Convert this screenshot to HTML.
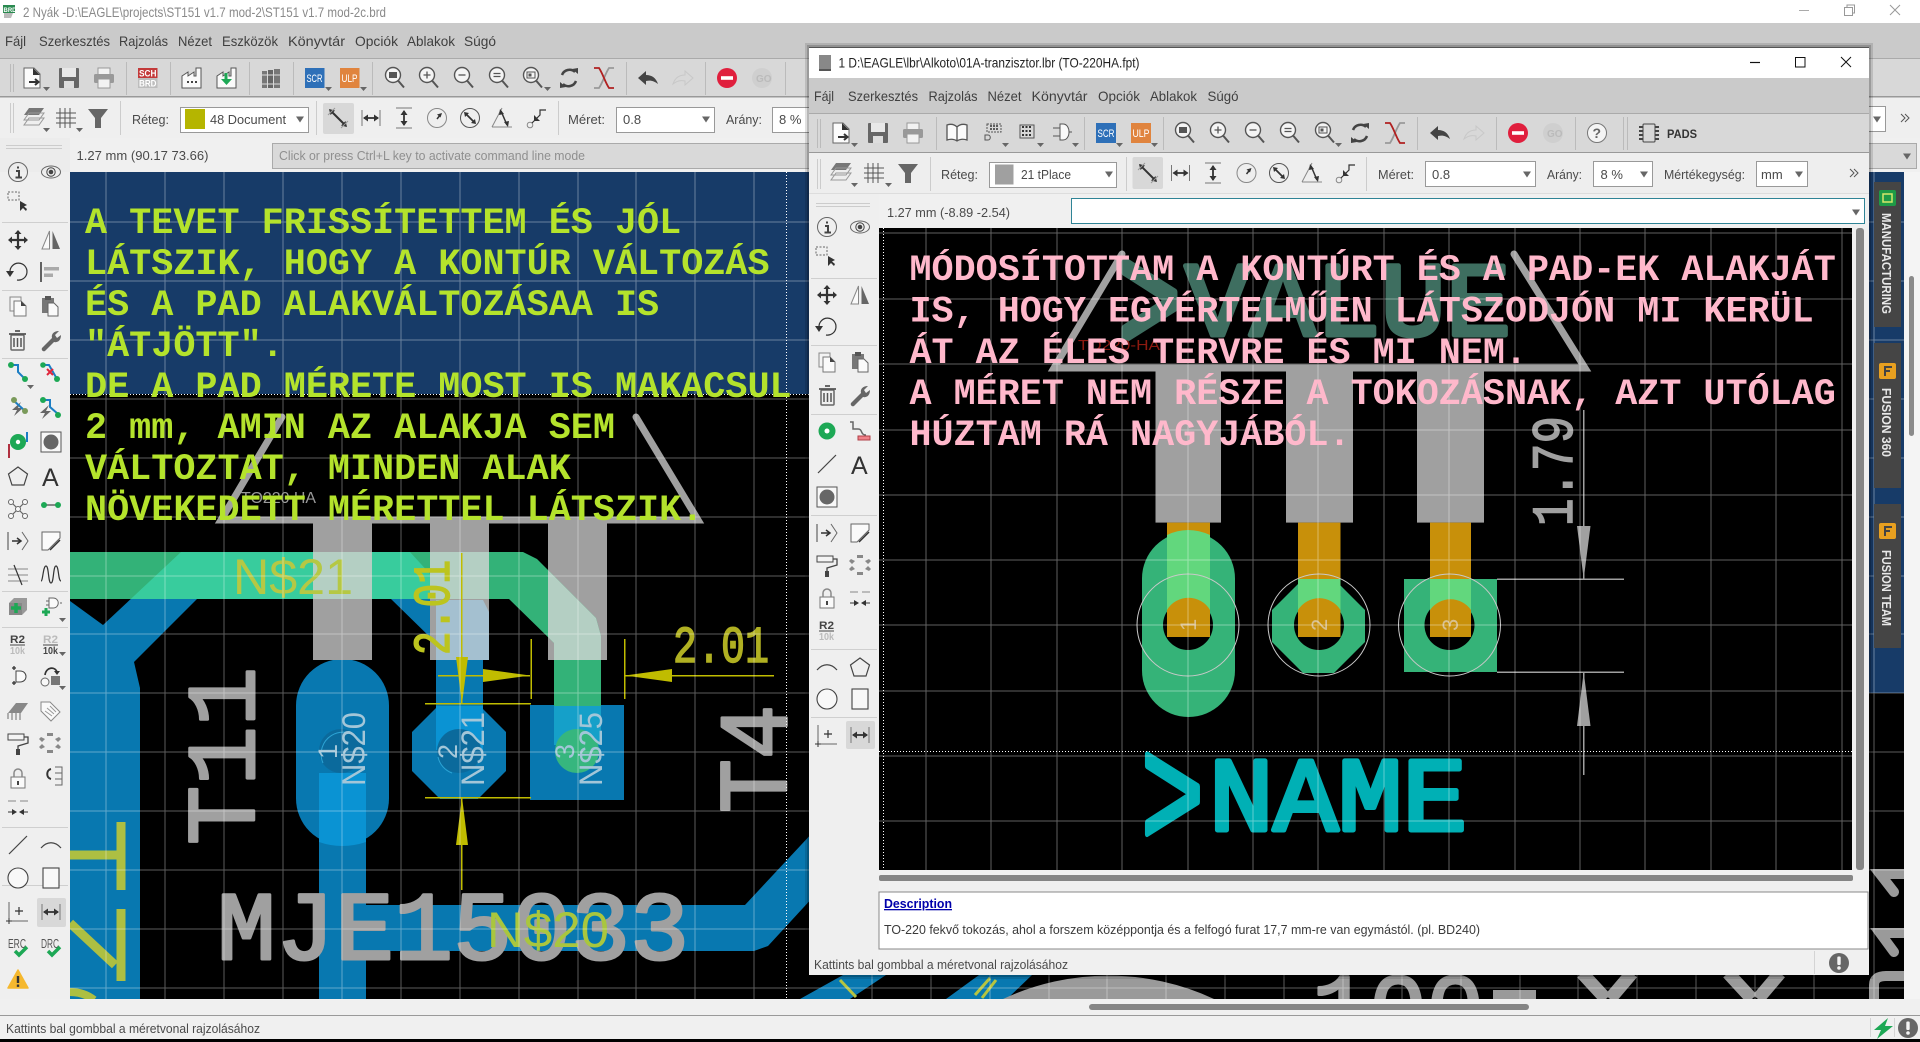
<!DOCTYPE html>
<html lang="hu"><head><meta charset="utf-8"><title>EAGLE</title>
<style>
html,body{margin:0;padding:0;background:#000;width:1920px;height:1042px;overflow:hidden}
svg{display:block}
text{font-family:"Liberation Sans",sans-serif;font-size:13px;fill:#3a3a3a}
.mono{font-family:"Liberation Mono",monospace}
.lime{font-family:"Liberation Mono",monospace;font-size:36.8px;font-weight:bold;fill:#b4e32c}
.pink{font-family:"Liberation Mono",monospace;font-size:36.76px;font-weight:bold;fill:#ffb8cb}
.men{font-size:14px;fill:#3f3f3f}
.big{font-family:"Liberation Mono",monospace;font-size:97px;fill:#a0a0a0;stroke:#a0a0a0;stroke-width:3;stroke-linejoin:round}
.lb{font-size:13px;fill:#4a4a4a}
</style></head><body>
<svg width="1920" height="1042" viewBox="0 0 1920 1042" xmlns="http://www.w3.org/2000/svg" shape-rendering="geometricPrecision">
<defs>
<clipPath id="cm"><rect x="70" y="172" width="1834" height="827"/></clipPath>
<clipPath id="cs"><rect x="879" y="228" width="973" height="642"/></clipPath>
<clipPath id="gt"><path d="M70 552H523L537 559L596 618L601 636V706H554V643L509 599H70Z"/></clipPath>
<g id="dd"><path d="M0 0h7l-3.5 4z" fill="#666"/></g>
<g id="arr"><path d="M-4 -2.5h8l-4 6z" fill="#666"/></g>
<g id="new"><path d="M-9 -10H1L7 -4V10H-9Z" fill="#fbfbfb" stroke="#666"/><path d="M0 -10L7 -3H0Z" fill="#333"/><path d="M-4 4H5M2 1l3.500 3-3.500 3" stroke="#333" stroke-width="2" fill="none"/></g>
<g id="save"><rect x="-10" y="-10" width="20" height="20" rx="1" fill="#666"/><rect x="-7" y="-10" width="14" height="9" fill="#e8e8e8"/><rect x="-5" y="3" width="10" height="7" fill="#ddd"/></g>
<g id="print"><rect x="-6" y="-10" width="12" height="7" fill="#f2f2f2" stroke="#999"/><rect x="-10" y="-4" width="20" height="9" rx="1.500" fill="#999"/><rect x="-6" y="1" width="12" height="9" fill="#f2f2f2" stroke="#999"/></g>
<g id="fact"><path d="M-10 10V-2L-4 -6V-2L2 -6V-2L4 -2V-10H9V10Z" fill="#fafafa" stroke="#555"/></g>
<g id="books"><rect x="-9" y="-7" width="5" height="17" fill="#777"/><rect x="-3" y="-8" width="5" height="18" fill="#666"/><rect x="3" y="-9" width="6" height="19" fill="#777"/><path d="M-9 -3h18M-9 6h18" stroke="#ddd"/></g>
<g id="zf"><circle cx="-2" cy="-3" r="7.500" fill="#f4f4f4" stroke="#555" stroke-width="1.400"/><path d="M3 2.500L9 9.500" stroke="#555" stroke-width="2"/></g>
<g id="z1"><use href="#zf"/><rect x="-6" y="-6" width="8" height="6" fill="#555"/></g>
<g id="z2"><use href="#zf"/><path d="M-5.500 -3h7M-2 -6.500v7" stroke="#555" stroke-width="1.300"/></g>
<g id="z3"><use href="#zf"/><path d="M-5.500 -3h7" stroke="#555" stroke-width="1.300"/></g>
<g id="z4"><use href="#zf"/><path d="M-5.500 -4.500h7M-5.500 -1.500h7" stroke="#555" stroke-width="1.300"/></g>
<g id="z5"><use href="#zf"/><rect x="-6" y="-6" width="8" height="6" fill="none" stroke="#555"/><rect x="-4.500" y="-4.500" width="3" height="3" fill="#555"/></g>
<g id="rot"><path d="M-7 -3A8 8 0 0 1 6 -6M7 3A8 8 0 0 1 -6 6" fill="none" stroke="#444" stroke-width="2.500"/><path d="M3 -9l6 -1v6zM-3 9l-6 1v-6z" fill="#444"/></g>
<g id="rats"><path d="M10 -10H5C1 -4 -1 4 -5 10H-10" fill="none" stroke="#999" stroke-width="1.800"/><path d="M-10 -10H-5C-1 -4 1 4 5 10H10" fill="none" stroke="#b02020" stroke-width="1.800"/></g>
<g id="undo"><path d="M-10 0L-2 -7V-3C4 -3 8 0 10 6C6 3 3 2 -2 3V7Z" fill="#444"/></g>
<g id="redo"><path d="M10 0L2 -7V-3C-4 -3 -8 0 -10 6C-6 3 -3 2 2 3V7Z" fill="none" stroke="#c8c8c8"/></g>
<g id="stop"><circle r="10" fill="#e01f3d"/><rect x="-6" y="-1.800" width="12" height="3.600" fill="#fff"/></g>
<g id="go"><circle r="10" fill="#cfcfcf"/></g>
<g id="layers"><path d="M-5 -10H10L5 -3H-10Z" fill="#777"/><path d="M-5 -5H10L5 2H-10ZM-5 0H10L5 7H-10Z" fill="none" stroke="#999"/></g>
<g id="grid"><path d="M-6 -10V10M-1 -10V10M4 -10V10M-10 -5H10M-10 0H10M-10 5H10" stroke="#555" fill="none"/></g>
<g id="filter"><path d="M-10 -9H10L3 0V10H-3V0Z" fill="#666"/></g>
<g id="d1"><path d="M-8 -8L8 8" stroke="#333" stroke-width="2"/><path d="M-9 -9l6 1.500-4.500 4.500zM9 9l-6 -1.500 4.500 -4.500z" fill="#333"/><path d="M-10 -3L-3 -10M3 10L10 3" stroke="#999"/></g>
<g id="d2"><path d="M-9 -8V8M9 -8V8" stroke="#777"/><path d="M-7 0H7" stroke="#333" stroke-width="1.800"/><path d="M-8 0l5 -3.500v7zM8 0l-5 -3.500v7z" fill="#333"/></g>
<g id="d3"><path d="M-8 -10H8M-8 10H8" stroke="#777"/><path d="M0 -7V7" stroke="#333" stroke-width="1.800"/><path d="M0 -8l-3.500 5h7zM0 8l-3.500 -5h7z" fill="#333"/></g>
<g id="d4"><circle r="9.500" fill="none" stroke="#888"/><path d="M0 1L4 -4" stroke="#333" stroke-width="1.500"/><path d="M5 -5l-5 1.500 3.500 3z" fill="#333"/></g>
<g id="d5"><circle r="9.500" fill="none" stroke="#555"/><path d="M-5 -5L5 5" stroke="#333" stroke-width="1.800"/><path d="M-6 -6l5 1 -4 4zM6 6l-5 -1 4 -4z" fill="#333"/></g>
<g id="d6"><path d="M-10 9H10M-10 9L0 -10" stroke="#888" fill="none"/><path d="M-1 -7L5 7" stroke="#333" stroke-width="1.500"/><path d="M-2 -9l4 5-5 1zM6 9l-4 -5 5 -1z" fill="#333"/></g>
<g id="d7"><circle cx="-7" cy="7" r="2.800" fill="none" stroke="#888"/><path d="M-5 5L3 -3V-8H9" stroke="#333" fill="none" stroke-width="1.200"/><path d="M-3 3l0 -6 6 6z" fill="#333"/></g>
<g id="info"><circle r="9.500" fill="none" stroke="#666"/><path d="M-2 -1H1V5M-2.500 5.500H4M0 -5.500V-3.500" stroke="#444" stroke-width="2" fill="none"/></g>
<g id="eye"><ellipse rx="9.500" ry="6" fill="none" stroke="#666"/><circle r="4.200" fill="none" stroke="#444"/><circle r="2.300" fill="#444"/></g>
<g id="sel"><rect x="-8" y="-8" width="11" height="8" fill="none" stroke="#666" stroke-dasharray="2 1.500"/><path d="M4 1V11L7 8L10 11L11 9L8 6.500L11 5Z" fill="#333"/></g>
<g id="move"><path d="M-8 0H8M0 -8V8" stroke="#333" stroke-width="2.200"/><path d="M0 -10l-3.500 4h7zM0 10l-3.500 -4h7zM-10 0l4 -3.500v7zM10 0l-4 -3.500v7z" fill="#333"/></g>
<g id="mirror"><path d="M-1.500 -9L-9 9H-1.500Z" fill="#fafafa" stroke="#888"/><path d="M1.500 -9L9 9H1.500Z" fill="#666"/></g>
<g id="rotl"><path d="M-8 0A8.500 8.500 0 1 1 -1 8" fill="none" stroke="#333" stroke-width="1.200"/><path d="M-12 -1h8l-4 6z" fill="#333"/></g>
<g id="align"><path d="M-9 -10V10" stroke="#333" stroke-width="1.500"/><rect x="-6" y="-5" width="15" height="3.500" fill="#aaa"/><rect x="-6" y="1.500" width="9" height="3.500" fill="#aaa"/></g>
<g id="copy"><rect x="-8" y="-9" width="11" height="14" fill="#f4f4f4" stroke="#888"/><path d="M-4 -5H3L8 0V10H-4Z" fill="#fafafa" stroke="#777"/><path d="M3 -5L8 0H3Z" fill="#444"/></g>
<g id="paste"><rect x="-8" y="-8" width="12" height="15" fill="#777"/><rect x="-5" y="-10" width="6" height="4" fill="#555"/><path d="M-2 -3H4L8 1V10H-2Z" fill="#fafafa" stroke="#666"/></g>
<g id="del"><rect x="-6" y="-6" width="13" height="15" rx="1" fill="none" stroke="#666" stroke-width="1.500"/><path d="M-8 -7H9M-2 -10H3" stroke="#555" stroke-width="1.800"/><path d="M-3 -3V6M0.500 -3V6M4 -3V6" stroke="#555" stroke-width="1.500"/></g>
<g id="wrench"><path d="M-9 7L1 -3C0 -7 3 -10 8 -10L4 -6L6 -3L10 -6C10 -1 7 2 3 1L-6 10C-8 11 -10 9 -9 7Z" fill="#666"/></g>
<g id="route"><path d="M-7 -8H0V-1L7 6" fill="none" stroke="#1c7ec4" stroke-width="2"/><circle cx="-7" cy="-8" r="3" fill="#1da855"/><circle cx="7" cy="6" r="3" fill="#1da855"/></g>
<g id="rip"><path d="M-7 -8H-1L7 6" fill="none" stroke="#1c7ec4" stroke-width="2"/><circle cx="-7" cy="-8" r="2.800" fill="#1da855"/><circle cx="7" cy="6" r="3" fill="#1da855"/><path d="M-3 -4L3 2M3 -4L-3 2" stroke="#e0263c" stroke-width="2"/></g>
<g id="bolt"><path d="M3 -6L-6 2H-1L-4 8L5 0H0Z" fill="#666"/></g>
<g id="via"><circle r="8.500" cx="0" cy="0" fill="#1da855"/><circle r="2.500" fill="#fff"/></g>
<g id="hole"><rect x="-10" y="-10" width="20" height="20" fill="#f8f8f8" stroke="#555"/><circle r="7.500" fill="#666"/></g>
<g id="poly"><path d="M0 -9L9.500 -2L6 9H-6L-9.500 -2Z" fill="none" stroke="#444" stroke-width="1.200"/></g>
<g id="star"><path d="M-6 -6L6 6M6 -6L-6 6" stroke="#666" stroke-width="1.200"/><g fill="#f8f8f8" stroke="#666"><circle r="2.500"/><circle cx="-7" cy="-7" r="2.500"/><circle cx="7" cy="-7" r="2.500"/><circle cx="-7" cy="7" r="2.500"/><circle cx="7" cy="7" r="2.500"/></g></g>
<g id="wire"><path d="M-7 0H7" stroke="#888" stroke-width="2"/><circle cx="-7" r="3" fill="#1da855"/><circle cx="7" r="3" fill="#1da855"/></g>
<g id="bus"><path d="M-10 -9V9" stroke="#444"/><path d="M-6 0H2M-1 -3L3 0L-1 3" fill="none" stroke="#333" stroke-width="1.500"/><path d="M4 -9L10 0L4 9" fill="none" stroke="#666"/></g>
<g id="miter"><path d="M-9 -9H9V-3L1 5L-3 9H-9Z" fill="#fafafa" stroke="#666"/><path d="M-1 9L9 -1" stroke="#333" stroke-width="1.500"/></g>
<g id="slice"><path d="M-10 -6H10M-10 0H10M-10 6H10" stroke="#aaa" stroke-width="1.500"/><path d="M-4 -10L4 10" stroke="#333" stroke-width="1.200"/></g>
<g id="mean"><path d="M-10 6C-8 6 -8 -9 -5 -9C-2 -9 -3 8 0 8C3 8 2 -9 5 -9C8 -9 7 6 10 6" fill="none" stroke="#333" stroke-width="1.200"/></g>
<g id="addpkg"><path d="M-9 -4L-4 -9H9V3L4 8H-9Z" fill="#999"/><rect x="-9" y="-4" width="13" height="12" fill="#888"/><path d="M-7 1H3M-2 -4V6" stroke="#1da855" stroke-width="3.500"/></g>
<g id="addgate"><path d="M-3 -9H1C8 -9 8 1 1 1H-3Z" fill="#fafafa" stroke="#666"/><path d="M-6 -6H-3M-6 -2H-3M8 -4H10" stroke="#666"/><path d="M-10 5H-2M-6 1V9" stroke="#1da855" stroke-width="3"/></g>
<g id="gate2"><path d="M-2 -6H2C10 -6 10 5 2 5H-2Z" fill="#fafafa" stroke="#444"/><path d="M-6 -9H-2M-4 -11V-7M-6 6H-2M-4 4V8" stroke="#333" stroke-width="1.300"/></g>
<g id="repl"><circle cx="-6" cy="5" r="4" fill="#f8f8f8" stroke="#666"/><rect x="0" y="-1" width="9" height="9" fill="#777"/><path d="M-6 -2C-5 -10 4 -11 6 -5" fill="none" stroke="#333" stroke-width="1.700"/><path d="M3 -6h6l-3 4z" fill="#333"/></g>
<g id="chip"><path d="M-10 2L-2 -8H10L3 2Z" fill="#888"/><path d="M-10 2V8M-6 2V9M-2 2V9M2 2V9" stroke="#999" stroke-width="1.500"/></g>
<g id="tag"><path d="M-9 -9H0L10 1L1 10L-9 0Z" fill="#fafafa" stroke="#888"/><path d="M-3 -3L4 3M-5 0L2 5M0 -5L6 1" stroke="#999"/></g>
<g id="roll"><rect x="-10" y="-9" width="16" height="6" fill="#f4f4f4" stroke="#444"/><path d="M6 -6H10V0L0 3V6" fill="none" stroke="#444" stroke-width="1.300"/><rect x="-2" y="6" width="4" height="6" fill="#444"/></g>
<g id="dots"><g fill="#888"><rect x="-3" y="-10" width="6" height="3"/><rect x="-3" y="7" width="6" height="3"/><path d="M-9 -6l4 2-3 3-3 -3zM9 -6l-4 2 3 3 3 -3zM-9 6l4 -2-3 -3-3 3zM9 6l-4 -2 3 -3 3 3z"/></g></g>
<g id="lock"><rect x="-7" y="-1" width="14" height="11" fill="#fafafa" stroke="#777"/><path d="M-4 -1V-5A4 4 0 0 1 4 -5V-1" fill="none" stroke="#888" stroke-width="1.500"/><rect x="-1" y="3" width="2" height="4" fill="#444"/></g>
<g id="swp"><path d="M-1 -7C-6 -6 -6 2 -1 3" fill="none" stroke="#333" stroke-width="2"/><path d="M3 -9H10V9H3M3 -3H10M3 3H10" fill="none" stroke="#666"/></g>
<g id="inv"><path d="M-10 -6H-2M2 -6H10" stroke="#aaa" stroke-width="1.500"/><path d="M-10 5H-2M10 5H2" stroke="#333"/><path d="M-1 5l-5 -3v6zM1 5l5 -3v6z" fill="#333"/></g>
<g id="line"><path d="M-9 9L9 -9" stroke="#444" stroke-width="1.200"/></g>
<g id="arc"><path d="M-10 3C-4 -4 4 -4 10 3" fill="none" stroke="#444" stroke-width="1.200"/></g>
<g id="circ"><circle r="10" fill="#f8f8f8" stroke="#444" stroke-width="1.100"/></g>
<g id="rc"><rect x="-8" y="-10" width="16" height="20" fill="#f8f8f8" stroke="#444" stroke-width="1.100"/></g>
<g id="orig"><path d="M-9 -10V9M-9 9H10" stroke="#666"/><path d="M-3 -1H5M1 -5V3" stroke="#333" stroke-width="1.200"/><path d="M-12 9H-6M-9 6V12" stroke="#333"/></g>
<g id="book"><path d="M0 -6C-3 -9 -7 -9 -10 -8V7C-7 6 -3 6 0 8C3 6 7 6 10 7V-8C7 -9 3 -9 0 -6V8" fill="#fafafa" stroke="#555" stroke-width="1.300"/></g>
<g id="pkg"><rect x="-7" y="-7" width="14" height="8" fill="none" stroke="#555" stroke-dasharray="2 1"/><path d="M-4 -5H5M-4 -2H5" stroke="#333" stroke-dasharray="2 1" stroke-width="1.500"/><path d="M-9 4H-6C-3 4 -3 9 -6 9H-9Z" fill="none" stroke="#555"/></g>
<g id="dev"><rect x="-7" y="-7" width="14" height="13" fill="none" stroke="#555"/><path d="M-5 -5H5M-5 -1H5M-5 3H5" stroke="#333" stroke-width="2" stroke-dasharray="2 1.500"/></g>
<g id="sym"><path d="M-2 -8H1C9 -8 9 8 1 8H-2Z" fill="#fafafa" stroke="#555"/><path d="M-9 -4H-2M-9 4H-2M7 0H10" stroke="#555"/></g>
<g id="smd"><path d="M-10 -9H-7V-2H-2C3 -2 0 4 6 4" fill="none" stroke="#666" stroke-width="1.500"/><rect x="-2" y="5" width="12" height="4" fill="#f08088" stroke="#b04048"/></g>
<g id="pads"><rect x="-6" y="-9" width="12" height="18" rx="1" fill="none" stroke="#444"/><path d="M-10 -6H10M-10 -2H10M-10 2H10M-10 6H10" stroke="#444" stroke-width="2" stroke-dasharray="4 12"/></g>
<g id="warn"><path d="M0 -10L10 8H-10Z" fill="#f5b82e" stroke="#f5b82e" stroke-width="1.500" stroke-linejoin="round"/><rect x="-1.200" y="-4" width="2.400" height="7" fill="#333"/><rect x="-1.200" y="4.500" width="2.400" height="2.400" fill="#333"/></g>
<g id="excl"><circle r="10" fill="#666"/><rect x="-1.700" y="-6.500" width="3.400" height="8.500" rx="1" fill="#f4f4f4"/><circle cy="5" r="1.800" fill="#f4f4f4"/></g>
<g id="chk"><path d="M-6 0L-2 4L6 -4" fill="none" stroke="#1da855" stroke-width="3.500"/></g>
</defs>

<!-- MAIN WINDOW BACKGROUNDS -->
<rect width="1920" height="1042" fill="#000"/>
<rect width="1920" height="23" fill="#fff"/>
<rect y="23" width="1920" height="36" fill="#cacaca"/>
<rect y="59" width="1920" height="38" fill="#d8d8d8"/>
<rect y="58" width="1920" height="1" fill="#aaa"/>
<rect y="97" width="1920" height="41" fill="#efefef"/>
<rect y="96" width="1920" height="1.500" fill="#999"/>
<rect y="138" width="1920" height="34" fill="#f0f0f0"/>
<rect y="172" width="70" height="843" fill="#efefef"/>
<rect y="138" width="70" height="34" fill="#ececec"/>
<rect x="1904" y="172" width="16" height="843" fill="#f4f4f4"/>
<rect y="999" width="1920" height="16" fill="#f0f0f0"/>
<rect y="1015" width="1920" height="1" fill="#999"/>
<rect y="1016" width="1920" height="23" fill="#f0f0f0"/>

<!-- MAIN CANVAS -->
<g clip-path="url(#cm)">
<rect x="70" y="172" width="1834" height="827" fill="#000"/>
<rect x="70" y="172" width="740" height="222" fill="#173b68"/>
<rect x="1869" y="172" width="35" height="521" fill="#173b68"/>
<!-- blue -->
<path d="M70 601L103 625L181 552H410L483 632V706H436V643L391 599H197L134 662L140 688V999H70Z" fill="#0878b0"/>
<rect x="319" y="760" width="47" height="239" fill="#0878b0"/>
<path d="M362 905H745L815 830V895L768 946L754 951H362Z" fill="#0878b0"/>
<rect x="296" y="659" width="93" height="186" rx="46.500" fill="#0878b0"/>
<path d="M319 773H366V842Q342 850 319 842Z" fill="#0a93d3"/>
<path d="M440 704H478L506 732V771L478 799H440L412 771V732Z" fill="#0878b0"/>
<path d="M436 706H483V750H436Z" fill="#0a93d3"/>
<rect x="530" y="705" width="94" height="95" fill="#0878b0"/>
<rect x="554" y="705" width="47" height="40" fill="#15a0c9"/>
<circle cx="341" cy="751" r="22" fill="#0b6a9c"/>
<path d="M323 763A22 22 0 0 1 360 740" fill="none" stroke="#2ca4d5"/>
<circle cx="459" cy="751" r="22" fill="#0b6a9c"/>
<path d="M438 757A22 22 0 0 0 452 773" fill="none" stroke="#2ca4d5"/>
<circle cx="577" cy="751" r="22" fill="#36b67e"/>
<!-- blue under the bottom of the sub window -->
<path d="M800 999L843 975H886L850 999Z" fill="#0878b0"/>
<path d="M946 999L979 975H1032L1007 999Z" fill="#0878b0"/>
<path d="M840 980L856 997M975 995L990 978M982 998L996 980" stroke="#b6c440" stroke-width="3" fill="none"/>
<!-- gray package -->
<path d="M282 417L221 520H698L636 417" fill="none" stroke="#a0a0a0" stroke-width="7" stroke-linecap="round"/>
<rect x="313" y="522" width="59" height="138" fill="#a0a0a0"/>
<rect x="430" y="522" width="59" height="138" fill="#a0a0a0"/>
<rect x="548" y="522" width="59" height="138" fill="#a0a0a0"/>
<!-- green track -->
<path d="M70 552H523L537 559L596 618L601 636V706H554V643L509 599H70Z" fill="#33b278"/>
<g clip-path="url(#gt)">
<path d="M70 601L103 625L181 552H410L483 632V706H436V643L391 599H197L134 662L140 688V999H70Z" fill="#38cc9d"/>
<rect x="313" y="522" width="59" height="138" fill="#b4cfc3"/>
<rect x="430" y="522" width="59" height="78" fill="#b4cfc3"/>
<rect x="548" y="522" width="59" height="138" fill="#b4cfc3"/>
</g>
<path d="M436 600H483L489 612V660H436V643Z" fill="#a4c0d0"/>
<path d="M430 600H436V660H430Z" fill="#a0a0a0"/>
<!-- big gray text -->
<text class="big" transform="translate(254 845) rotate(-90)" textLength="178" lengthAdjust="spacingAndGlyphs">T11</text>
<text class="big" transform="translate(786 813) rotate(-90)" textLength="108" lengthAdjust="spacingAndGlyphs">T4</text>
<text class="big" x="217" y="959" textLength="472" lengthAdjust="spacingAndGlyphs">MJE15033</text>
<path d="M1003 999A250 250 0 0 1 1214 999Z" fill="#9a9a9a"/>
<text class="big" x="1312" y="1041" textLength="172" lengthAdjust="spacingAndGlyphs" style="fill:#9a9a9a;stroke:#9a9a9a">100</text>
<rect x="1493" y="990" width="43" height="10" fill="#9a9a9a"/>
<path d="M1582 973L1606 999M1632 973L1610 999M1728 973L1752 999M1780 973L1758 999" stroke="#9a9a9a" stroke-width="13" fill="none"/>
<path d="M1904 874H1880L1894 892M1904 933H1880L1894 952M1874 999V985Q1874 976 1886 976H1904" fill="none" stroke="#9a9a9a" stroke-width="10" stroke-linecap="round"/>
<!-- pad labels -->
<text transform="translate(365 786) rotate(-90)" textLength="74" lengthAdjust="spacingAndGlyphs" style="font-size:32px;fill:#a3c6d8">N$20</text>
<text transform="translate(484 786) rotate(-90)" textLength="74" lengthAdjust="spacingAndGlyphs" style="font-size:32px;fill:#a3c6d8">N$21</text>
<text transform="translate(602 786) rotate(-90)" textLength="74" lengthAdjust="spacingAndGlyphs" style="font-size:32px;fill:#a3c6d8">N$25</text>
<text transform="translate(337 759) rotate(-90)" style="font-size:27px;fill:#a3c6d8">1</text>
<text transform="translate(457 759) rotate(-90)" style="font-size:27px;fill:#a3c6d8">2</text>
<text transform="translate(574 759) rotate(-90)" style="font-size:27px;fill:#a3c6d8">3</text>
<text x="233" y="594" textLength="120" lengthAdjust="spacingAndGlyphs" style="font-size:50px;fill:#b5c844">N$21</text>
<text x="487" y="947" textLength="122" lengthAdjust="spacingAndGlyphs" style="font-size:50px;fill:#a9c63e">N$20</text>
<!-- dimensions -->
<g fill="#c0bc00" stroke="none">
<rect x="461" y="553" width="1.500" height="151"/><rect x="461" y="797" width="1.500" height="93"/>
<path d="M462 704L456 657H468Z"/><path d="M462 797L456 845H468Z"/>
<rect x="425" y="703" width="106" height="1.500"/><rect x="425" y="797" width="106" height="1.500"/>
<rect x="438" y="675" width="92" height="1.500"/><rect x="624" y="675" width="150" height="1.500"/>
<path d="M530 675.500L483 669V682Z"/><path d="M625 675.500L672 669V682Z"/>
<rect x="530.500" y="639" width="1.500" height="60"/><rect x="624" y="639" width="1.500" height="60"/>
</g>
<text class="mono" transform="translate(449 655) rotate(-90)" textLength="95" lengthAdjust="spacingAndGlyphs" style="font-size:52px;fill:#bcc41e;stroke:#bcc41e;stroke-width:1.500">2.01</text>
<text class="mono" x="673" y="662" textLength="96" lengthAdjust="spacingAndGlyphs" style="font-size:52px;fill:#b0b022;stroke:#b0b022;stroke-width:1.500">2.01</text>
<!-- yellow at lower-left -->
<path d="M121 822V890M121 855H70M121 909V981M115 965L70 923" fill="none" stroke="#adbf42" stroke-width="9"/>
<path d="M70 992Q84 992 94 1000" fill="none" stroke="#adbf42" stroke-width="8"/>
<!-- grid -->
<path d="M106 172V999M165 172V999M224 172V999M283 172V999M342 172V999M401 172V999M460 172V999M519 172V999M578 172V999M636 172V999M695 172V999M754 172V999M872 975V999M931 975V999M990 975V999M1049 975V999M1107 975V999M1166 975V999M1225 975V999M1284 975V999M1343 975V999M1402 975V999M1461 975V999M1520 975V999M1578 975V999M1637 975V999M1696 975V999M1755 975V999M1814 975V999M1874 172V999M70 222H810M70 281H810M70 340H810M70 399H810M70 458H810M70 517H810M70 576H810M70 634H810M70 693H810M70 752H810M70 811H810M70 870H810M70 929H810M70 988H1904M1869 222H1904M1869 281H1904M1869 340H1904M1869 399H1904M1869 458H1904M1869 517H1904M1869 576H1904M1869 634H1904M1869 693H1904M1869 752H1904M1869 811H1904M1869 870H1904M1869 929H1904" stroke="#fff" stroke-opacity=".36" stroke-width="1" fill="none"/>
<path d="M786.500 172V999M70 394.500H810" stroke="#fff" stroke-width="1" stroke-dasharray="1 2" fill="none"/>
<text x="241" y="503" textLength="75" lengthAdjust="spacingAndGlyphs" style="font-size:16px;fill:#9a9a9a">TO220 HA</text>
<!-- tabs -->
<rect x="1874" y="182" width="27" height="145" fill="#454545"/>
<rect x="1874" y="343" width="27" height="145" fill="#454545"/>
<rect x="1874" y="504" width="27" height="144" fill="#454545"/>
<rect x="1879" y="190" width="17" height="16" rx="2" fill="#1e9a46"/>
<rect x="1883" y="194" width="9" height="8" fill="none" stroke="#d6e86a" stroke-width="1.500"/>
<rect x="1879" y="363" width="17" height="16" rx="2" fill="#e8a020"/>
<rect x="1879" y="523" width="17" height="16" rx="2" fill="#e8a020"/>
<path d="M1885 376V367H1892M1885 371H1890M1885 536V527H1892M1885 531H1890" fill="none" stroke="#444" stroke-width="2"/>
<text transform="translate(1882 213) rotate(90)" textLength="101" lengthAdjust="spacingAndGlyphs" style="font-size:13px;font-weight:bold;fill:#e8e8e8">MANUFACTURING</text>
<text transform="translate(1882 388) rotate(90)" textLength="69" lengthAdjust="spacingAndGlyphs" style="font-size:13px;font-weight:bold;fill:#e8e8e8">FUSION 360</text>
<text transform="translate(1882 550) rotate(90)" textLength="76" lengthAdjust="spacingAndGlyphs" style="font-size:13px;font-weight:bold;fill:#e8e8e8">FUSION TEAM</text>
<!-- lime annotation -->
<text class="lime" x="85" y="233">A TEVET FRISSÍTETTEM ÉS JÓL</text>
<text class="lime" x="85" y="274">LÁTSZIK, HOGY A KONTÚR VÁLTOZÁS</text>
<text class="lime" x="85" y="315">ÉS A PAD ALAKVÁLTOZÁSAA IS</text>
<text class="lime" x="85" y="356">"ÁTJÖTT".</text>
<text class="lime" x="85" y="397">DE A PAD MÉRETE MOST IS MAKACSUL</text>
<text class="lime" x="85" y="438">2 mm, AMIN AZ ALAKJA SEM</text>
<text class="lime" x="85" y="479">VÁLTOZTAT, MINDEN ALAK</text>
<text class="lime" x="85" y="520">NÖVEKEDETT MÉRETTEL LÁTSZIK.</text>
</g>
<rect x="1909" y="276" width="5" height="160" rx="2.500" fill="#8a8a8a"/>
<rect x="1089" y="1004" width="440" height="6" rx="3" fill="#858585"/>

<!-- MAIN TITLE -->
<rect x="3" y="5" width="12" height="8" fill="#2a8a50"/><text x="3.500" y="12" style="font-size:6px;fill:#fff;font-weight:bold">BRD</text><path d="M4 13H13L11 18H4Z" fill="#bbb"/>
<text x="23" y="17" textLength="363" lengthAdjust="spacingAndGlyphs" style="font-size:14px;fill:#8a8a8a">2 Nyák -D:\EAGLE\projects\ST151 v1.7 mod-2\ST151 v1.7 mod-2c.brd</text>
<path d="M1799 10.500H1809" stroke="#aaa"/><path d="M1844.500 7.500H1852.500V15.500H1844.500ZM1847 7.500V5H1854.500V13H1852.500" fill="none" stroke="#999"/><path d="M1890 5L1900 15M1900 5L1890 15" stroke="#999"/>

<!-- MAIN MENU -->
<text class="men" x="5" y="46" textLength="21" lengthAdjust="spacingAndGlyphs">Fájl</text>
<text class="men" x="39" y="46" textLength="71" lengthAdjust="spacingAndGlyphs">Szerkesztés</text>
<text class="men" x="119" y="46" textLength="49" lengthAdjust="spacingAndGlyphs">Rajzolás</text>
<text class="men" x="178" y="46" textLength="34" lengthAdjust="spacingAndGlyphs">Nézet</text>
<text class="men" x="222" y="46" textLength="56" lengthAdjust="spacingAndGlyphs">Eszközök</text>
<text class="men" x="288" y="46" textLength="57" lengthAdjust="spacingAndGlyphs">Könyvtár</text>
<text class="men" x="355" y="46" textLength="43" lengthAdjust="spacingAndGlyphs">Opciók</text>
<text class="men" x="407" y="46" textLength="48" lengthAdjust="spacingAndGlyphs">Ablakok</text>
<text class="men" x="464" y="46" textLength="32" lengthAdjust="spacingAndGlyphs">Súgó</text>

<!-- MAIN TOOLBAR 1 -->
<path d="M10.500 64V92M13.500 64V92M126.500 62V95M170.500 62V95M249.500 62V95M293.500 62V95M372.500 62V95M626.500 62V95M705.500 62V95M785.500 62V95" stroke="#bbb" fill="none"/>
<use href="#new" x="33" y="78"/><use href="#dd" x="43" y="87"/>
<use href="#save" x="69" y="78"/><use href="#print" x="104" y="78"/>
<rect x="138" y="68" width="19.500" height="10" fill="#c33a3a"/><rect x="138" y="78" width="19.500" height="10" fill="#bdbdbd"/>
<text x="139" y="76.500" textLength="17.500" lengthAdjust="spacingAndGlyphs" style="font-size:9px;font-weight:bold;fill:#fff">SCH</text>
<text x="139" y="86.500" textLength="17.500" lengthAdjust="spacingAndGlyphs" style="font-size:9px;font-weight:bold;fill:#fff">BRD</text>
<use href="#fact" x="192" y="78"/><path d="M187 82h2m2 0h2m2 0h2" stroke="#444" stroke-width="2"/>
<use href="#fact" x="227" y="78"/><path d="M226 73v8" stroke="#1da855" stroke-width="3"/><path d="M221 79h11l-5.500 6z" fill="#1da855"/>
<use href="#books" x="271" y="78"/>
<rect x="305" y="68" width="19.500" height="20" fill="#2e70b8"/><text x="306.500" y="82" textLength="16" lengthAdjust="spacingAndGlyphs" style="font-size:11px;fill:#fff">SCR</text><use href="#dd" x="325" y="87"/>
<rect x="340" y="68" width="19.500" height="20" fill="#e0843e"/><text x="341.500" y="82" textLength="16" lengthAdjust="spacingAndGlyphs" style="font-size:11px;fill:#fff">ULP</text><use href="#dd" x="360" y="87"/>
<use href="#z1" x="395" y="78"/><use href="#z2" x="429" y="78"/><use href="#z3" x="464" y="78"/><use href="#z4" x="499" y="78"/><use href="#z5" x="533" y="78"/><use href="#dd" x="544" y="87"/>
<use href="#rot" x="569" y="78"/><use href="#rats" x="604" y="78"/>
<use href="#undo" x="648" y="78"/><use href="#redo" x="683" y="78"/>
<use href="#stop" x="727" y="78"/><use href="#go" x="762" y="78"/><text x="756" y="82" style="font-size:10px;font-weight:bold;fill:#bbb">GO</text>

<!-- MAIN TOOLBAR 2 -->
<path d="M10.500 103V133M13.500 103V133M120.500 101V135M316.500 101V135M558.500 101V135" stroke="#ccc" fill="none"/>
<use href="#layers" x="34" y="118"/><use href="#dd" x="43" y="128"/><use href="#grid" x="66" y="118"/><use href="#dd" x="76" y="128"/><use href="#filter" x="98" y="118"/>
<text class="lb" x="132" y="124" textLength="37" lengthAdjust="spacingAndGlyphs">Réteg:</text>
<rect x="180.500" y="107.500" width="128" height="25" fill="#fff" stroke="#999"/>
<rect x="185" y="109" width="20" height="20" fill="#b5b500"/>
<text class="lb" x="210" y="124" textLength="76" lengthAdjust="spacingAndGlyphs">48 Document</text>
<use href="#arr" x="300" y="119"/>
<rect x="323" y="103" width="31" height="31" rx="2" fill="#d8d8d8"/>
<use href="#d1" x="338" y="118"/><use href="#d2" x="371" y="118"/><use href="#d3" x="404" y="118"/><use href="#d4" x="437" y="118"/><use href="#d5" x="470" y="118"/><use href="#d6" x="502" y="118"/><use href="#d7" x="537" y="118"/>
<text class="lb" x="568" y="124" textLength="37" lengthAdjust="spacingAndGlyphs">Méret:</text>
<rect x="616.500" y="107.500" width="98" height="25" fill="#fff" stroke="#999"/>
<text class="lb" x="623" y="124">0.8</text><use href="#arr" x="706" y="119"/>
<text class="lb" x="726" y="124" textLength="36" lengthAdjust="spacingAndGlyphs">Arány:</text>
<rect x="772.500" y="107.500" width="60" height="25" fill="#fff" stroke="#999"/>
<text class="lb" x="779" y="124">8 %</text>
<rect x="1868.500" y="106.500" width="17" height="25" fill="#fff" stroke="#999"/><use href="#arr" x="1877" y="119"/>
<path d="M1901 114l4 4-4 4M1905 114l4 4-4 4" fill="none" stroke="#555"/>

<!-- MAIN CMD -->
<text class="lb" x="76.500" y="160" textLength="132" lengthAdjust="spacingAndGlyphs">1.27 mm (90.17 73.66)</text>
<rect x="272.500" y="143.500" width="1644" height="25" fill="#d9d9d9" stroke="#aaa"/>
<text x="279" y="160" textLength="306" lengthAdjust="spacingAndGlyphs" style="fill:#8f8f8f">Click or press Ctrl+L key to activate command line mode</text>
<use href="#arr" x="1907" y="156"/>

<!-- MAIN LEFT TOOLBAR -->
<path d="M6 145.500H62M6 148.500H62" stroke="#ccc"/>
<path d="M2 222.500H68M2 290.500H68M2 358.500H68M2 591.500H68M2 627.500H68M2 827.500H68M2 885.500H68" stroke="#cfcfcf"/>
<use href="#info" x="18" y="172"/><use href="#eye" x="51" y="172"/><use href="#sel" x="16" y="200"/>
<use href="#move" x="18" y="240"/><use href="#mirror" x="51" y="240"/><use href="#rotl" x="18" y="272"/><use href="#align" x="50" y="272"/>
<use href="#copy" x="18" y="306"/><use href="#paste" x="50" y="306"/><use href="#del" x="17" y="341"/><use href="#wrench" x="51" y="341"/>
<use href="#route" x="18" y="373"/><use href="#dd" x="27" y="385"/><use href="#rip" x="50" y="373"/>
<use href="#bolt" x="18" y="408"/><path d="M13 400L24 410" stroke="#1c7ec4" stroke-width="2"/><circle cx="14" cy="400" r="3" fill="#7a9a5a"/><circle cx="25" cy="411" r="3" fill="#7a9a5a"/>
<use href="#bolt" x="46" y="411"/><path d="M43 400H50V407L58 414" fill="none" stroke="#1c7ec4" stroke-width="2"/><circle cx="43" cy="400" r="3" fill="#1da855"/><circle cx="58" cy="415" r="3" fill="#1da855"/>
<path d="M9 444V458" stroke="#b03040" stroke-width="2"/><circle cx="18" cy="442" r="8" fill="#1da855"/><circle cx="18" cy="442" r="2.200" fill="#fff"/><path d="M27 432V442" stroke="#1c7ec4" stroke-width="2"/>
<use href="#hole" x="51" y="442"/><use href="#poly" x="18" y="476"/>
<text x="42" y="486" style="font-size:25px;fill:#333">A</text>
<use href="#star" x="18" y="509"/><use href="#wire" x="51" y="505"/>
<use href="#bus" x="18" y="541"/><use href="#miter" x="51" y="541"/>
<use href="#slice" x="18" y="575"/><use href="#mean" x="51" y="575"/>
<use href="#addpkg" x="18" y="607"/><use href="#addgate" x="52" y="607"/><use href="#dd" x="59" y="618"/>
<text x="10" y="643" textLength="15" lengthAdjust="spacingAndGlyphs" style="font-size:11px;font-weight:bold;fill:#444">R2</text><path d="M10 645H25" stroke="#444"/><text x="10" y="654" textLength="15" lengthAdjust="spacingAndGlyphs" style="font-size:10px;font-weight:bold;fill:#bbb">10k</text>
<text x="43" y="643" textLength="15" lengthAdjust="spacingAndGlyphs" style="font-size:11px;font-weight:bold;fill:#bbb">R2</text><path d="M43 645H58" stroke="#444"/><text x="43" y="654" textLength="15" lengthAdjust="spacingAndGlyphs" style="font-size:10px;font-weight:bold;fill:#444">10k</text><use href="#dd" x="59" y="652"/>
<use href="#gate2" x="18" y="677"/><use href="#repl" x="51" y="677"/><use href="#dd" x="59" y="686"/>
<use href="#chip" x="18" y="711"/><use href="#tag" x="50" y="711"/>
<use href="#roll" x="18" y="743"/><use href="#dots" x="50" y="743"/>
<use href="#lock" x="18" y="778"/><use href="#swp" x="52" y="776"/><use href="#inv" x="18" y="807"/>
<use href="#line" x="18" y="845"/><use href="#arc" x="51" y="845"/><use href="#circ" x="18" y="878"/><use href="#rc" x="51" y="878"/>
<rect x="37" y="898" width="29" height="29" rx="2" fill="#d8d8d8"/><use href="#orig" x="18" y="912"/><use href="#d2" x="51" y="912"/>
<text x="8" y="948" textLength="18" lengthAdjust="spacingAndGlyphs" style="font-size:13px;fill:#555">ERC</text><use href="#chk" x="21" y="951"/>
<text x="41" y="948" textLength="18" lengthAdjust="spacingAndGlyphs" style="font-size:13px;fill:#555">DRC</text><use href="#chk" x="54" y="951"/>
<use href="#warn" x="18" y="980"/>

<!-- MAIN STATUS -->
<text class="lb" x="6" y="1033" textLength="254" lengthAdjust="spacingAndGlyphs">Kattints bal gombbal a méretvonal rajzolásához</text>
<path d="M1870.500 1018V1037M1894.500 1018V1037" stroke="#d4d4d4"/>
<path d="M1888 1018L1874 1030H1881L1877 1039L1893 1026H1885Z" fill="#1da855"/>
<use href="#excl" x="1908" y="1028"/>

<!-- SUB WINDOW -->
<rect x="805" y="43" width="1068" height="936" fill="#000" fill-opacity=".12"/>
<rect x="807" y="45" width="1064" height="932" fill="#000" fill-opacity=".18"/>
<rect x="809" y="47" width="1060" height="928" fill="#f0f0f0"/>
<rect x="809" y="47" width="1060" height="1" fill="#555"/>
<rect x="809" y="48" width="1060" height="30" fill="#fff"/>
<rect x="809" y="78" width="1060" height="36" fill="#cacaca"/>
<rect x="809" y="114" width="1060" height="39" fill="#d8d8d8"/>
<rect x="809" y="113" width="1060" height="1" fill="#aaa"/>
<rect x="809" y="152" width="1060" height="1.500" fill="#999"/>
<rect x="809" y="153" width="1060" height="40" fill="#eeeeee"/>
<rect x="809" y="193" width="1060" height="1" fill="#ddd"/>

<!-- sub title -->
<path d="M819 55H831V69H819Z" fill="#888"/><path d="M819 69H831V71H819Z" fill="#555"/>
<text x="838.500" y="67.500" textLength="301" lengthAdjust="spacingAndGlyphs" style="font-size:14px;fill:#222">1 D:\EAGLE\lbr\Alkoto\01A-tranzisztor.lbr (TO-220HA.fpt)</text>
<path d="M1750 62.500H1760" stroke="#111" stroke-width="1.200"/><rect x="1795.500" y="57.500" width="9.500" height="9.500" fill="none" stroke="#111"/><path d="M1841 57L1851 67M1851 57L1841 67" stroke="#111"/>

<!-- sub menu -->
<text class="men" x="814" y="101" textLength="20" lengthAdjust="spacingAndGlyphs">Fájl</text>
<text class="men" x="848" y="101" textLength="70" lengthAdjust="spacingAndGlyphs">Szerkesztés</text>
<text class="men" x="928.500" y="101" textLength="49" lengthAdjust="spacingAndGlyphs">Rajzolás</text>
<text class="men" x="987.500" y="101" textLength="34" lengthAdjust="spacingAndGlyphs">Nézet</text>
<text class="men" x="1031.500" y="101" textLength="56" lengthAdjust="spacingAndGlyphs">Könyvtár</text>
<text class="men" x="1098" y="101" textLength="42" lengthAdjust="spacingAndGlyphs">Opciók</text>
<text class="men" x="1150" y="101" textLength="47" lengthAdjust="spacingAndGlyphs">Ablakok</text>
<text class="men" x="1207.500" y="101" textLength="31" lengthAdjust="spacingAndGlyphs">Súgó</text>

<!-- sub toolbar 1 -->
<path d="M817.500 119V148M820.500 119V148M936.500 117V150M1084.500 117V150M1163.500 117V150M1417.500 117V150M1496.500 117V150M1575.500 117V150M1623.500 117V150M1627.500 117V150" stroke="#bbb" fill="none"/>
<use href="#new" x="842" y="133"/><use href="#dd" x="851" y="143"/><use href="#save" x="878" y="133"/><use href="#print" x="913" y="133"/>
<use href="#book" x="957" y="133"/><use href="#pkg" x="994" y="131"/><use href="#dd" x="1002" y="143"/><use href="#dev" x="1027" y="132"/><use href="#dd" x="1037" y="143"/><use href="#sym" x="1062" y="132"/><use href="#dd" x="1072" y="143"/>
<rect x="1096" y="123" width="20" height="20" fill="#2e70b8"/><text x="1097.500" y="137" textLength="17" lengthAdjust="spacingAndGlyphs" style="font-size:11px;fill:#fff">SCR</text><use href="#dd" x="1116" y="143"/>
<rect x="1131" y="123" width="20" height="20" fill="#e0843e"/><text x="1132.500" y="137" textLength="17" lengthAdjust="spacingAndGlyphs" style="font-size:11px;fill:#fff">ULP</text><use href="#dd" x="1151" y="143"/>
<use href="#z1" x="1185" y="133"/><use href="#z2" x="1220" y="133"/><use href="#z3" x="1255" y="133"/><use href="#z4" x="1290" y="133"/><use href="#z5" x="1325" y="133"/><use href="#dd" x="1335" y="143"/>
<use href="#rot" x="1360" y="133"/><use href="#rats" x="1395" y="133"/><use href="#undo" x="1440" y="133"/><use href="#redo" x="1474" y="133"/>
<use href="#stop" x="1518" y="133"/><use href="#go" x="1553" y="133"/><text x="1547" y="137" style="font-size:10px;font-weight:bold;fill:#bbb">GO</text>
<circle cx="1597" cy="133" r="9.500" fill="#f4f4f4" stroke="#777"/><text x="1592.500" y="138" style="font-size:14px;font-weight:bold;fill:#666">?</text>
<use href="#pads" x="1649" y="133"/>
<text x="1667" y="138" textLength="30" lengthAdjust="spacingAndGlyphs" style="font-size:12px;font-weight:bold;fill:#333">PADS</text>

<!-- sub toolbar 2 -->
<path d="M817.500 159V189M820.500 159V189M930.500 157V191M1126.500 157V191M1366.500 157V191" stroke="#ccc" fill="none"/>
<use href="#layers" x="841" y="173"/><use href="#dd" x="851" y="183"/><use href="#grid" x="874" y="173"/><use href="#dd" x="885" y="183"/><use href="#filter" x="908" y="173"/>
<text class="lb" x="941" y="179" textLength="37" lengthAdjust="spacingAndGlyphs">Réteg:</text>
<rect x="989.500" y="162.500" width="127" height="25" fill="#fff" stroke="#999"/><rect x="995" y="164.500" width="18.500" height="20" fill="#a0a0a0"/>
<text class="lb" x="1021" y="179" textLength="50" lengthAdjust="spacingAndGlyphs">21 tPlace</text><use href="#arr" x="1109" y="174"/>
<rect x="1132.500" y="157" width="30.500" height="32" rx="2" fill="#d8d8d8"/>
<use href="#d1" x="1148" y="173"/><use href="#d2" x="1180.500" y="173"/><use href="#d3" x="1213" y="173"/><use href="#d4" x="1246.500" y="173"/><use href="#d5" x="1279" y="173"/><use href="#d6" x="1312" y="173"/><use href="#d7" x="1346" y="173"/>
<text class="lb" x="1378" y="179" textLength="36" lengthAdjust="spacingAndGlyphs">Méret:</text>
<rect x="1425.500" y="161.500" width="110" height="25" fill="#fff" stroke="#999"/><text class="lb" x="1432" y="179">0.8</text><use href="#arr" x="1527" y="174"/>
<text class="lb" x="1547" y="179" textLength="35" lengthAdjust="spacingAndGlyphs">Arány:</text>
<rect x="1593.500" y="161.500" width="59" height="25" fill="#fff" stroke="#999"/><text class="lb" x="1600.500" y="179">8 %</text><use href="#arr" x="1644" y="174"/>
<text class="lb" x="1664" y="179" textLength="81" lengthAdjust="spacingAndGlyphs">Mértékegység:</text>
<rect x="1756.500" y="161.500" width="51" height="25" fill="#fff" stroke="#999"/><text class="lb" x="1761" y="179">mm</text><use href="#arr" x="1799" y="174"/>
<path d="M1850 169l4 4-4 4M1854 169l4 4-4 4" fill="none" stroke="#555"/>

<!-- sub cmd -->
<text class="lb" x="887" y="217" textLength="123" lengthAdjust="spacingAndGlyphs">1.27 mm (-8.89 -2.54)</text>
<rect x="1071.500" y="198.500" width="793" height="25" fill="#fff" stroke="#2f8496"/>
<use href="#arr" x="1856" y="212"/>

<!-- SUB CANVAS -->
<g clip-path="url(#cs)">
<rect x="879" y="228" width="973" height="642" fill="#000"/>
<g style="stroke:#3e6e60;stroke-width:5;stroke-linejoin:round">
<text class="mono" transform="translate(1118 352) scale(1 1.5)" style="font-size:105px;fill:#3e6e60">&gt;</text>
<text class="mono" x="1185" y="335" textLength="326" lengthAdjust="spacingAndGlyphs" style="font-size:105px;fill:#3e6e60">VALUE</text>
</g>
<text x="1078" y="350" textLength="82" lengthAdjust="spacingAndGlyphs" style="font-size:15px;fill:#8c1a10">TO220-HA</text>
<path d="M1122 254L1054 368H1585L1514 254" fill="none" stroke="#a0a0a0" stroke-width="7" stroke-linecap="round"/>
<rect x="1155.500" y="370" width="65.500" height="152.600" fill="#a0a0a0"/>
<rect x="1286" y="370" width="67" height="152.600" fill="#a0a0a0"/>
<rect x="1417" y="370" width="67" height="152.600" fill="#a0a0a0"/>
<rect x="1142" y="532" width="93" height="185" rx="46.500" fill="#35b378"/>
<path d="M1303 579H1334L1365 610V642L1334 673H1303L1272 642V610Z" fill="#35b378"/>
<rect x="1404" y="579" width="93" height="93" fill="#35b378"/>
<circle cx="1188" cy="625" r="25" fill="#000"/><circle cx="1319" cy="625" r="25" fill="#000"/><circle cx="1449.500" cy="625" r="25" fill="#000"/>
<rect x="1167" y="522.600" width="43" height="114.400" fill="#c8900a"/>
<rect x="1298" y="522.600" width="42.500" height="114.400" fill="#c8900a"/>
<rect x="1430" y="522.600" width="41" height="114.400" fill="#c8900a"/>
<path d="M1167 535Q1188 525 1210 535V610A25 25 0 0 0 1167 610Z" fill="#62d77d"/>
<path d="M1298 579H1340.500V610A25 25 0 0 0 1298 610Z" fill="#62d77d"/>
<path d="M1430 579H1471V610A25 25 0 0 0 1430 610Z" fill="#62d77d"/>
<circle cx="1188" cy="625" r="51" fill="none" stroke="#c9c9c9"/><circle cx="1319" cy="625" r="51" fill="none" stroke="#c9c9c9"/><circle cx="1449.500" cy="625" r="51" fill="none" stroke="#c9c9c9"/>
<text transform="translate(1196 631) rotate(-90)" style="font-size:22px;fill:#d8c090">1</text>
<text transform="translate(1327 631) rotate(-90)" style="font-size:22px;fill:#d8c090">2</text>
<text transform="translate(1458 631) rotate(-90)" style="font-size:22px;fill:#d8c090">3</text>
<!-- dim -->
<g fill="#a0a0a0">
<rect x="1583" y="410" width="1.500" height="169"/><rect x="1583" y="672" width="1.500" height="103"/>
<path d="M1583.700 579L1577 526H1590.500Z"/><path d="M1583.700 672L1577 726H1590.500Z"/>
<rect x="1497" y="578.500" width="127" height="1.500"/><rect x="1497" y="671.500" width="127" height="1.500"/>
</g>
<text class="mono" transform="translate(1572 526) rotate(-90)" textLength="110" lengthAdjust="spacingAndGlyphs" style="font-size:58px;fill:#a0a0a0;stroke:#a0a0a0;stroke-width:1.500">1.79</text>
<g style="stroke:#00b0b5;stroke-linejoin:round">
<text class="mono" transform="translate(1141 846) scale(1 1.5)" style="font-size:105px;fill:#00b0b5;stroke-width:4">&gt;</text>
<text class="mono" x="1209" y="830" textLength="258" lengthAdjust="spacingAndGlyphs" style="font-size:105px;fill:#00b0b5;stroke-width:5">NAME</text>
</g>
<!-- grid -->
<path d="M926 228V870M991 228V870M1057 228V870M1122 228V870M1188 228V870M1253 228V870M1318 228V870M1384 228V870M1449 228V870M1515 228V870M1580 228V870M1645 228V870M1711 228V870M1776 228V870M1842 228V870M879 233H1852M879 299H1852M879 364H1852M879 430H1852M879 495H1852M879 560H1852M879 625H1852M879 691H1852M879 756H1852M879 821H1852" stroke="#fff" stroke-opacity=".38" stroke-width="1" fill="none"/>
<path d="M883.500 228V870M879 751.500H1852" stroke="#fff" stroke-dasharray="1 2" fill="none"/>
<text class="pink" x="909.500" y="280">MÓDOSÍTOTTAM A KONTÚRT ÉS A PAD-EK ALAKJÁT</text>
<text class="pink" x="909.500" y="321.500">IS, HOGY EGYÉRTELMŰEN LÁTSZODJÓN MI KERÜL</text>
<text class="pink" x="909.500" y="363">ÁT AZ ÉLES TERVRE ÉS MI NEM.</text>
<text class="pink" x="909.500" y="404">A MÉRET NEM RÉSZE A TOKOZÁSNAK, AZT UTÓLAG</text>
<text class="pink" x="909.500" y="445">HÚZTAM RÁ NAGYJÁBÓL.</text>
</g>
<!-- sub scrollbars -->
<rect x="1856" y="228" width="8" height="642" rx="3" fill="#858585"/>
<rect x="879" y="875" width="974" height="6" rx="2" fill="#858585"/>
<!-- sub left toolbar -->
<rect x="809" y="194" width="70" height="781" fill="#efefef"/>
<path d="M816 203.500H870M816 206.500H870" stroke="#ccc"/>
<path d="M811 278.500H877M811 345.500H877M811 414.500H877M811 515.500H877M811 649.500H877M811 717.500H877" stroke="#cfcfcf"/>
<use href="#info" x="827" y="227"/><use href="#eye" x="860" y="227"/><use href="#sel" x="824" y="255"/>
<use href="#move" x="827" y="295"/><use href="#mirror" x="860" y="295"/><use href="#rotl" x="827" y="327"/>
<use href="#copy" x="827" y="362"/><use href="#paste" x="860" y="362"/><use href="#del" x="827" y="396"/><use href="#wrench" x="860" y="396"/>
<use href="#via" x="827" y="431"/><use href="#smd" x="860" y="431"/>
<use href="#line" x="827" y="464"/><text x="851" y="474" style="font-size:25px;fill:#333">A</text><use href="#hole" x="827" y="497"/>
<use href="#bus" x="827" y="533"/><use href="#miter" x="860" y="533"/><use href="#roll" x="827" y="565"/><use href="#dots" x="860" y="565"/>
<use href="#lock" x="827" y="598"/><use href="#inv" x="860" y="598"/>
<text x="819" y="629" textLength="15" lengthAdjust="spacingAndGlyphs" style="font-size:11px;font-weight:bold;fill:#444">R2</text><path d="M819 631H834" stroke="#444"/><text x="819" y="640" textLength="15" lengthAdjust="spacingAndGlyphs" style="font-size:10px;font-weight:bold;fill:#bbb">10k</text>
<use href="#arc" x="827" y="667"/><use href="#poly" x="860" y="667"/><use href="#circ" x="827" y="699"/><use href="#rc" x="860" y="699"/>
<rect x="846" y="721" width="29" height="28" rx="2" fill="#d8d8d8"/><use href="#orig" x="827" y="735"/><use href="#d2" x="860" y="735"/>
<!-- description -->
<rect x="879" y="892" width="989" height="57" fill="#fff" stroke="#888"/>
<text x="884" y="908" textLength="68" lengthAdjust="spacingAndGlyphs" style="font-size:13px;font-weight:bold;fill:#0000aa;text-decoration:underline">Description</text>
<text x="884" y="934" textLength="596" lengthAdjust="spacingAndGlyphs" style="font-size:13px;fill:#3a3a3a">TO-220 fekvő tokozás, ahol a forszem középpontja és a felfogó furat 17,7 mm-re van egymástól. (pl. BD240)</text>
<!-- sub status -->
<text class="lb" x="814" y="969" textLength="254" lengthAdjust="spacingAndGlyphs">Kattints bal gombbal a méretvonal rajzolásához</text>
<path d="M1814.500 951V974" stroke="#d4d4d4"/>
<use href="#excl" x="1839" y="963"/>
</svg>
</body></html>
